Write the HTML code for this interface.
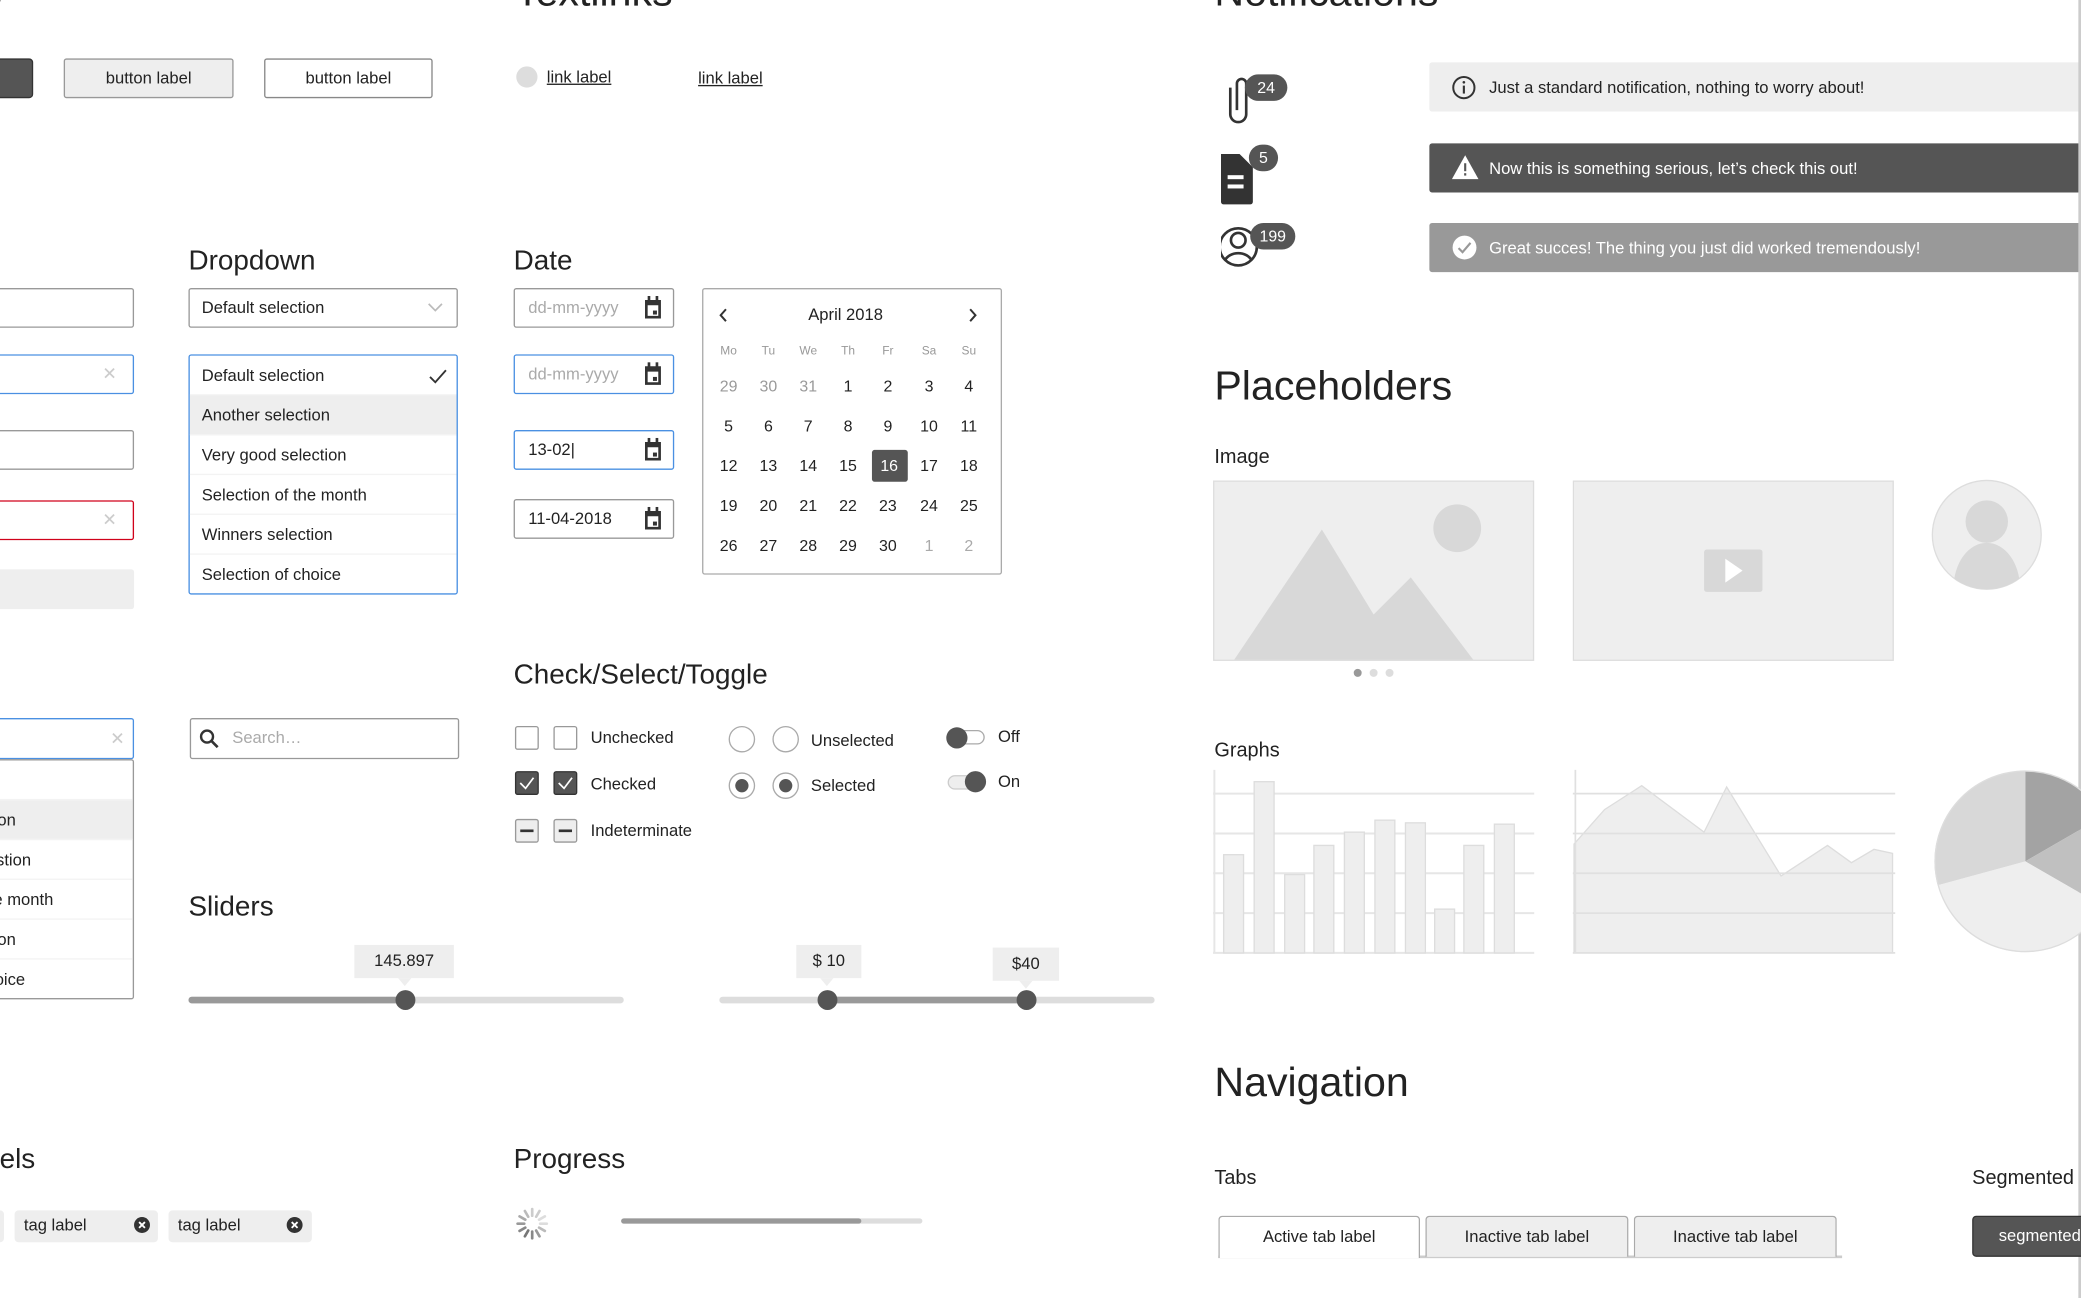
<!DOCTYPE html>
<html><head><meta charset="utf-8">
<style>
html,body{margin:0;padding:0;background:#fff;overflow:hidden}
body{width:2081px;height:1298px;position:relative}
#w{position:absolute;left:0;top:0;width:1568px;height:978px;transform:scale(1.32717);transform-origin:0 0;font-family:"Liberation Sans",Arial,sans-serif;color:#222;font-size:12.5px}
#w div,#w span{position:absolute;box-sizing:border-box}
.h1{font-size:31px;white-space:nowrap}
.h2{font-size:21px;white-space:nowrap}
.h3{font-size:15px;white-space:nowrap}
.box{border:1px solid #999;border-radius:2px;background:#fff;white-space:nowrap}
.t{white-space:nowrap}
.blue{border-color:#4a90e2!important}
.x{color:#ccc;font-size:13px}
.row{left:0;width:100%;height:30px;line-height:30px;padding-left:9px;border-bottom:1px solid #f3f3f3}
.cal{width:30px;text-align:center;font-size:12px}
.cb{width:18px;height:18px;border:1px solid #999;border-radius:2px;background:#fff}
.cbk{background:#555;border-color:#333}
.ind{background:#eee}
.rd{width:20px;height:20px;border:1px solid #aaa;border-radius:50%;background:#fff}
</style></head><body><div id="w">

<div class="h1" style="left:-14px;top:-24px">s</div>
<div class="h1" style="left:388px;top:-24px">Textlinks</div>
<div class="h1" style="left:915px;top:-24px">Notifications</div>

<div style="left:-10px;top:44px;width:35px;height:30px;background:#555;border:1px solid #333;border-radius:3px"></div>
<div class="box" style="left:48px;top:44px;width:128px;height:30px;background:#eee;text-align:center;line-height:28px;border-color:#999">button label</div>
<div class="box" style="left:199px;top:44px;width:127px;height:30px;text-align:center;line-height:28px;border-color:#888">button label</div>

<div style="left:389px;top:50px;width:16px;height:16px;border-radius:50%;background:#ddd"></div>
<div class="t" style="left:412px;top:51px;text-decoration:underline">link label</div>
<div class="t" style="left:526px;top:52px;text-decoration:underline">link label</div>

<svg style="position:absolute;left:920px;top:54px" width="60" height="150" viewBox="0 0 60 150">
<path d="M7 12 V32 a6 6 0 0 0 12 0 V9 a3.5 3.5 0 0 0 -7 0 V29" fill="none" stroke="#333" stroke-width="2"/>
<rect x="18" y="2" width="32" height="20" rx="10" fill="#555"/>
<text x="34" y="16" font-size="12" fill="#fff" text-anchor="middle" font-family="Liberation Sans">24</text>
<path d="M0 62 h14 l10 10 v26 a2 2 0 0 1 -2 2 h-20 a2 2 0 0 1 -2 -2z" fill="#333"/>
<rect x="5" y="78" width="12" height="3" fill="#fff"/><rect x="5" y="85" width="12" height="3" fill="#fff"/>
<rect x="21" y="55" width="22" height="20" rx="10" fill="#555"/>
<text x="32" y="69" font-size="12" fill="#fff" text-anchor="middle" font-family="Liberation Sans">5</text>
<circle cx="13" cy="132" r="14" fill="none" stroke="#333" stroke-width="2"/>
<circle cx="13" cy="127" r="5.5" fill="none" stroke="#333" stroke-width="2"/>
<path d="M3 142 a11 9 0 0 1 20 0" fill="none" stroke="#333" stroke-width="2"/>
<rect x="22" y="114" width="34" height="20" rx="10" fill="#555"/>
<text x="39" y="128" font-size="12" fill="#fff" text-anchor="middle" font-family="Liberation Sans">199</text>
</svg>

<div style="left:1077px;top:47px;width:500px;height:37px;background:#eee;border-radius:2px"></div>
<svg style="position:absolute;left:1094px;top:57px" width="18" height="18"><circle cx="9" cy="9" r="8" fill="none" stroke="#333" stroke-width="1.5"/><rect x="8.2" y="7.5" width="1.6" height="6" fill="#333"/><circle cx="9" cy="5" r="1" fill="#333"/></svg>
<div class="t" style="left:1122px;top:59px">Just a standard notification, nothing to worry about!</div>
<div style="left:1077px;top:108px;width:500px;height:37px;background:#555;border-radius:2px"></div>
<svg style="position:absolute;left:1093px;top:116px" width="22" height="20"><path d="M11 1 L21 19 H1z" fill="#fff"/><rect x="10.2" y="7" width="1.6" height="6" fill="#555"/><rect x="10.2" y="14.5" width="1.6" height="1.8" fill="#555"/></svg>
<div class="t" style="left:1122px;top:120px;color:#fff">Now this is something serious, let’s check this out!</div>
<div style="left:1077px;top:168px;width:500px;height:37px;background:#999;border-radius:2px"></div>
<svg style="position:absolute;left:1094px;top:177px" width="19" height="19"><circle cx="9.5" cy="9.5" r="9" fill="#fff"/><path d="M5 10 l3 3 l6 -7" fill="none" stroke="#999" stroke-width="1.6"/></svg>
<div class="t" style="left:1122px;top:180px;color:#fff">Great succes! The thing you just did worked tremendously!</div>
<div style="left:1566px;top:0;width:2px;height:978px;background:#ccc"></div>

<div class="h2" style="left:142px;top:185px">Dropdown</div>
<div class="h2" style="left:387px;top:185px">Date</div>

<div class="box" style="left:-10px;top:217px;width:111px;height:30px"></div>
<div class="box blue" style="left:-10px;top:267px;width:111px;height:30px"><span class="x" style="left:86px;top:6px">✕</span></div>
<div class="box" style="left:-10px;top:324px;width:111px;height:30px"></div>
<div class="box" style="left:-10px;top:377px;width:111px;height:30px;border-color:#d0021b"><span class="x" style="left:86px;top:6px">✕</span></div>
<div style="left:-10px;top:429px;width:111px;height:30px;background:#eee;border-radius:2px"></div>

<div class="box" style="left:142px;top:217px;width:203px;height:30px;line-height:28px;padding-left:9px">Default selection
<svg style="position:absolute;left:179px;top:10px" width="12" height="8"><path d="M1 1 L6 6 L11 1" fill="none" stroke="#bbb" stroke-width="1.3"/></svg></div>

<div class="box blue" style="left:142px;top:267px;width:203px;height:181px;overflow:hidden">
<div class="row" style="top:0">Default selection<svg style="position:absolute;left:180px;top:10px" width="14" height="11"><path d="M1 6 L5 10 L13 1" fill="none" stroke="#333" stroke-width="1.4"/></svg></div>
<div class="row" style="top:30px;background:#eee">Another selection</div>
<div class="row" style="top:60px">Very good selection</div>
<div class="row" style="top:90px">Selection of the month</div>
<div class="row" style="top:120px">Winners selection</div>
<div class="row" style="top:150px;border:none">Selection of choice</div>
</div>

<div class="box" style="left:387px;top:217px;width:121px;height:30px;line-height:28px;padding-left:10px;color:#aaa">dd-mm-yyyy</div>
<div class="box blue" style="left:387px;top:267px;width:121px;height:30px;line-height:28px;padding-left:10px;color:#aaa">dd-mm-yyyy</div>
<div class="box blue" style="left:387px;top:324px;width:121px;height:30px;line-height:28px;padding-left:10px">13-02|</div>
<div class="box" style="left:387px;top:376px;width:121px;height:30px;line-height:28px;padding-left:10px">11-04-2018</div>
<svg style="position:absolute;left:485px;top:223px" width="14" height="180" viewBox="0 0 14 180">
<g fill="#333"><path d="M1 3h12v14h-12z M3 7v8h8v-8z" fill-rule="evenodd"/><rect x="3" y="0" width="2" height="4"/><rect x="9" y="0" width="2" height="4"/><rect x="7" y="11" width="3" height="3"/></g>
<g fill="#333" transform="translate(0,50)"><path d="M1 3h12v14h-12z M3 7v8h8v-8z" fill-rule="evenodd"/><rect x="3" y="0" width="2" height="4"/><rect x="9" y="0" width="2" height="4"/><rect x="7" y="11" width="3" height="3"/></g>
<g fill="#333" transform="translate(0,107)"><path d="M1 3h12v14h-12z M3 7v8h8v-8z" fill-rule="evenodd"/><rect x="3" y="0" width="2" height="4"/><rect x="9" y="0" width="2" height="4"/><rect x="7" y="11" width="3" height="3"/></g>
<g fill="#333" transform="translate(0,159)"><path d="M1 3h12v14h-12z M3 7v8h8v-8z" fill-rule="evenodd"/><rect x="3" y="0" width="2" height="4"/><rect x="9" y="0" width="2" height="4"/><rect x="7" y="11" width="3" height="3"/></g>
</svg>

<div class="box" style="left:529px;top:217px;width:226px;height:216px;border-color:#aaa"></div>
<svg style="position:absolute;left:540px;top:231px" width="200" height="14"><path d="M7 2 L3 6.5 L7 11" fill="none" stroke="#333" stroke-width="1.5"/><path d="M191 2 L195 6.5 L191 11" fill="none" stroke="#333" stroke-width="1.5"/></svg>
<div class="t" style="left:609px;top:230px">April 2018</div>
<div style="left:657px;top:339px;width:27px;height:24px;background:#555;border-radius:2px"></div>

<div class="h2" style="left:387px;top:497px">Check/Select/Toggle</div>
<div class="cb" style="left:388px;top:547px"></div><div class="cb" style="left:417px;top:547px"></div>
<div class="t" style="left:445px;top:549px">Unchecked</div>
<div class="cb cbk" style="left:388px;top:581px"></div><div class="cb cbk" style="left:417px;top:581px"></div>
<svg style="position:absolute;left:388px;top:581px" width="48" height="18"><path d="M4 9 L8 13 L14 5" fill="none" stroke="#fff" stroke-width="1.3"/><path d="M33 9 L37 13 L43 5" fill="none" stroke="#fff" stroke-width="1.3"/></svg>
<div class="t" style="left:445px;top:584px">Checked</div>
<div class="cb ind" style="left:388px;top:617px"></div><div class="cb ind" style="left:417px;top:617px"></div>
<div style="left:392px;top:625px;width:10px;height:2px;background:#333"></div><div style="left:421px;top:625px;width:10px;height:2px;background:#333"></div>
<div class="t" style="left:445px;top:619px">Indeterminate</div>

<div class="rd" style="left:549px;top:547px"></div><div class="rd" style="left:582px;top:547px"></div>
<div class="t" style="left:611px;top:551px">Unselected</div>
<div class="rd" style="left:549px;top:582px"></div><div class="rd" style="left:582px;top:582px"></div>
<div style="left:554px;top:587px;width:10px;height:10px;border-radius:50%;background:#555"></div>
<div style="left:587px;top:587px;width:10px;height:10px;border-radius:50%;background:#555"></div>
<div class="t" style="left:611px;top:585px">Selected</div>

<div style="left:714px;top:550px;width:28px;height:11px;border:1px solid #aaa;border-radius:6px;background:#fff"></div>
<div style="left:713px;top:548px;width:16px;height:16px;border-radius:50%;background:#555"></div>
<div class="t" style="left:752px;top:548px">Off</div>
<div style="left:714px;top:584px;width:28px;height:11px;border:1px solid #ccc;border-radius:6px;background:#eee"></div>
<div style="left:727px;top:581px;width:16px;height:16px;border-radius:50%;background:#555"></div>
<div class="t" style="left:752px;top:582px">On</div>

<div class="box blue" style="left:-10px;top:541px;width:111px;height:31px"><span class="x" style="left:92px;top:7px">✕</span></div>
<div class="box" style="left:-10px;top:572px;width:111px;height:181px;overflow:hidden;border-color:#999">
<div class="row" style="top:0;padding-left:0"></div>
<div class="row" style="top:30px;padding-left:0;background:#eee"><span style="left:7px;top:0">on</span></div>
<div class="row" style="top:60px;padding-left:0"><span style="left:6px;top:0">stion</span></div>
<div class="row" style="top:90px;padding-left:0"><span style="left:4px;top:0">e month</span></div>
<div class="row" style="top:120px;padding-left:0"><span style="left:7px;top:0">on</span></div>
<div class="row" style="top:150px;padding-left:0;border:none"><span style="left:5px;top:0">oice</span></div>
</div>

<div class="box" style="left:143px;top:541px;width:203px;height:31px;border-color:#999"></div>
<svg style="position:absolute;left:150px;top:549px" width="16" height="16"><circle cx="6" cy="6" r="4.5" fill="none" stroke="#333" stroke-width="1.8"/><path d="M9.5 9.5 L14 14" stroke="#333" stroke-width="2"/></svg>
<div class="t" style="left:175px;top:549px;color:#aaa">Search…</div>

<div class="h2" style="left:142px;top:672px">Sliders</div>
<div style="left:142px;top:751px;width:328px;height:5px;background:#ddd;border-radius:3px"></div>
<div style="left:142px;top:751px;width:163px;height:5px;background:#999;border-radius:3px"></div>
<div style="left:298px;top:746px;width:15px;height:15px;border-radius:50%;background:#555"></div>
<div style="left:267px;top:712px;width:75px;height:25px;background:#eee;text-align:center;line-height:25px">145.897</div>
<div style="left:300px;top:737px;width:0;height:0;border-left:5px solid transparent;border-right:5px solid transparent;border-top:6px solid #eee"></div>

<div style="left:542px;top:751px;width:328px;height:5px;background:#ddd;border-radius:3px"></div>
<div style="left:623px;top:751px;width:150px;height:5px;background:#999"></div>
<div style="left:616px;top:746px;width:15px;height:15px;border-radius:50%;background:#555"></div>
<div style="left:766px;top:746px;width:15px;height:15px;border-radius:50%;background:#555"></div>
<div style="left:600px;top:712px;width:49px;height:25px;background:#eee;text-align:center;line-height:25px">$ 10</div>
<div style="left:618px;top:737px;width:0;height:0;border-left:5px solid transparent;border-right:5px solid transparent;border-top:6px solid #eee"></div>
<div style="left:748px;top:714px;width:50px;height:25px;background:#eee;text-align:center;line-height:25px">$40</div>
<div style="left:768px;top:739px;width:0;height:0;border-left:5px solid transparent;border-right:5px solid transparent;border-top:6px solid #eee"></div>

<div class="h2" style="left:-12px;top:862px">bels</div>
<div class="h2" style="left:387px;top:862px">Progress</div>
<div style="left:-10px;top:912px;width:13px;height:24px;background:#eee;border-radius:3px"></div>
<div style="left:11px;top:912px;width:108px;height:24px;background:#eee;border-radius:3px"></div>
<div class="t" style="left:18px;top:916px">tag label</div>
<div style="left:127px;top:912px;width:108px;height:24px;background:#eee;border-radius:3px"></div>
<div class="t" style="left:134px;top:916px">tag label</div>
<svg style="position:absolute;left:100px;top:916px" width="130" height="14">
<circle cx="7" cy="7" r="6" fill="#333"/><path d="M4.8 4.8 L9.2 9.2 M9.2 4.8 L4.8 9.2" stroke="#fff" stroke-width="1.4"/>
<circle cx="122" cy="7" r="6" fill="#333"/><path d="M119.8 4.8 L124.2 9.2 M124.2 4.8 L119.8 9.2" stroke="#fff" stroke-width="1.4"/></svg>
<svg style="position:absolute;left:387px;top:908px" width="28" height="28" viewBox="-14 -14 28 28">
<g stroke-width="2" stroke-linecap="round">
<line x1="0" y1="-6" x2="0" y2="-11" stroke="#ccc"/>
<line x1="0" y1="-6" x2="0" y2="-11" stroke="#ccc" transform="rotate(30)"/>
<line x1="0" y1="-6" x2="0" y2="-11" stroke="#ddd" transform="rotate(60)"/>
<line x1="0" y1="-6" x2="0" y2="-11" stroke="#ddd" transform="rotate(90)"/>
<line x1="0" y1="-6" x2="0" y2="-11" stroke="#bbb" transform="rotate(120)"/>
<line x1="0" y1="-6" x2="0" y2="-11" stroke="#999" transform="rotate(150)"/>
<line x1="0" y1="-6" x2="0" y2="-11" stroke="#888" transform="rotate(180)"/>
<line x1="0" y1="-6" x2="0" y2="-11" stroke="#777" transform="rotate(210)"/>
<line x1="0" y1="-6" x2="0" y2="-11" stroke="#888" transform="rotate(240)"/>
<line x1="0" y1="-6" x2="0" y2="-11" stroke="#999" transform="rotate(270)"/>
<line x1="0" y1="-6" x2="0" y2="-11" stroke="#aaa" transform="rotate(300)"/>
<line x1="0" y1="-6" x2="0" y2="-11" stroke="#bbb" transform="rotate(330)"/>
</g></svg>
<div style="left:468px;top:918px;width:227px;height:4px;background:#ddd;border-radius:2px"></div>
<div style="left:468px;top:918px;width:181px;height:4px;background:#999;border-radius:2px"></div>

<div class="h1" style="left:915px;top:273px">Placeholders</div>
<div class="h3" style="left:915px;top:336px">Image</div>
<svg style="position:absolute;left:914px;top:362px" width="243" height="150">
<rect x="0.5" y="0.5" width="241" height="135" fill="#eee" stroke="#ddd"/>
<path d="M16 135 L82 37 L121 101 L149 73 L196 135z" fill="#d8d8d8"/>
<circle cx="184" cy="36" r="18" fill="#d8d8d8"/>
<circle cx="109" cy="145" r="3" fill="#999"/><circle cx="121" cy="145" r="3" fill="#ddd"/><circle cx="133" cy="145" r="3" fill="#ddd"/>
</svg>
<svg style="position:absolute;left:1185px;top:362px" width="243" height="137">
<rect x="0.5" y="0.5" width="241" height="135" fill="#eee" stroke="#ddd"/>
<rect x="99" y="52" width="44" height="32" rx="2" fill="#d8d8d8"/>
<path d="M115 59 V77 L128 68z" fill="#fff"/>
</svg>
<svg style="position:absolute;left:1454px;top:361px" width="86" height="86">
<defs><clipPath id="cc"><circle cx="43" cy="42" r="41"/></clipPath></defs>
<circle cx="43" cy="42" r="41" fill="#eee" stroke="#ddd"/>
<g clip-path="url(#cc)"><ellipse cx="43" cy="32" rx="16" ry="16" fill="#d8d8d8"/><ellipse cx="43" cy="82" rx="25" ry="34" fill="#d8d8d8"/></g>
</svg>

<div class="h3" style="left:915px;top:557px">Graphs</div>
<svg style="position:absolute;left:914px;top:580px" width="244" height="140">
<g stroke="#e6e6e6" stroke-width="1.5"><line x1="0" y1="18" x2="242" y2="18"/><line x1="0" y1="48" x2="242" y2="48"/><line x1="0" y1="78" x2="242" y2="78"/><line x1="0" y1="108" x2="242" y2="108"/><line x1="0" y1="138" x2="242" y2="138"/><line x1="1" y1="0" x2="1" y2="138"/></g>
<g fill="#eee" stroke="#ddd">
<rect x="8" y="64" width="15" height="74"/><rect x="31" y="9" width="15" height="129"/><rect x="54" y="79" width="15" height="59"/><rect x="76" y="57" width="15" height="81"/><rect x="99" y="47" width="15" height="91"/><rect x="122" y="38" width="15" height="100"/><rect x="145" y="40" width="15" height="98"/><rect x="167" y="105" width="15" height="33"/><rect x="189" y="57" width="15" height="81"/><rect x="212" y="41" width="15" height="97"/></g>
</svg>
<svg style="position:absolute;left:1185px;top:580px" width="244" height="140">
<path d="M1 56 L24 30 L52 12 L99 47 L116 13 L157 80 L192 57 L210 70 L227 60 L241 63 V138 H1z" fill="#eee" stroke="#ddd"/>
<g stroke="#e0e0e0" stroke-width="1.3"><line x1="0" y1="18" x2="243" y2="18"/><line x1="0" y1="48" x2="243" y2="48"/><line x1="0" y1="78" x2="243" y2="78"/><line x1="0" y1="108" x2="243" y2="108"/><line x1="0" y1="138" x2="243" y2="138"/><line x1="2" y1="0" x2="2" y2="138"/></g>
</svg>
<svg style="position:absolute;left:1456px;top:580px" width="112" height="140">
<g transform="translate(70,69)">
<path d="M0 0 L0 -68 A68 68 0 0 1 58.9 -34z" fill="#a3a3a3"/>
<path d="M0 0 L58.9 -34 A68 68 0 0 1 58.9 34z" fill="#c0c0c0"/>
<path d="M0 0 L58.9 34 A68 68 0 0 1 -66 18z" fill="#eee"/>
<path d="M0 0 L-66 18 A68 68 0 0 1 0 -68z" fill="#d8d8d8"/>
<circle r="68" fill="none" stroke="#ddd"/></g>
</svg>

<div class="h1" style="left:915px;top:798px">Navigation</div>
<div class="h3" style="left:915px;top:879px">Tabs</div>
<div class="h3" style="left:1486px;top:879px">Segmented</div>
<div style="left:918px;top:946px;width:470px;height:1.5px;background:#ccc"></div>
<div style="left:918px;top:916px;width:152px;height:32px;background:#fff;border:1px solid #aaa;border-bottom:none;border-radius:3px 3px 0 0;text-align:center;line-height:31px">Active tab label</div>
<div style="left:1074px;top:916px;width:153px;height:31px;background:#eee;border:1px solid #aaa;border-bottom:none;border-radius:3px 3px 0 0;text-align:center;line-height:31px">Inactive tab label</div>
<div style="left:1231px;top:916px;width:153px;height:31px;background:#eee;border:1px solid #aaa;border-bottom:none;border-radius:3px 3px 0 0;text-align:center;line-height:31px">Inactive tab label</div>
<div style="left:1486px;top:916px;width:90px;height:31px;background:#555;border:1px solid #333;border-radius:3px;color:#fff;line-height:29px;padding-left:19px">segmented</div>

<div class="cal" style="left:534px;top:259px;color:#999;font-size:9px">Mo</div>
<div class="cal" style="left:564px;top:259px;color:#999;font-size:9px">Tu</div>
<div class="cal" style="left:594px;top:259px;color:#999;font-size:9px">We</div>
<div class="cal" style="left:624px;top:259px;color:#999;font-size:9px">Th</div>
<div class="cal" style="left:654px;top:259px;color:#999;font-size:9px">Fr</div>
<div class="cal" style="left:685px;top:259px;color:#999;font-size:9px">Sa</div>
<div class="cal" style="left:715px;top:259px;color:#999;font-size:9px">Su</div>

<div class="cal" style="left:534px;top:284px;color:#999">29</div><div class="cal" style="left:564px;top:284px;color:#999">30</div><div class="cal" style="left:594px;top:284px;color:#999">31</div><div class="cal" style="left:624px;top:284px">1</div><div class="cal" style="left:654px;top:284px">2</div><div class="cal" style="left:685px;top:284px">3</div><div class="cal" style="left:715px;top:284px">4</div>
<div class="cal" style="left:534px;top:314px">5</div><div class="cal" style="left:564px;top:314px">6</div><div class="cal" style="left:594px;top:314px">7</div><div class="cal" style="left:624px;top:314px">8</div><div class="cal" style="left:654px;top:314px">9</div><div class="cal" style="left:685px;top:314px">10</div><div class="cal" style="left:715px;top:314px">11</div>
<div class="cal" style="left:534px;top:344px">12</div><div class="cal" style="left:564px;top:344px">13</div><div class="cal" style="left:594px;top:344px">14</div><div class="cal" style="left:624px;top:344px">15</div><div class="cal" style="left:655px;top:344px;color:#fff">16</div><div class="cal" style="left:685px;top:344px">17</div><div class="cal" style="left:715px;top:344px">18</div>
<div class="cal" style="left:534px;top:374px">19</div><div class="cal" style="left:564px;top:374px">20</div><div class="cal" style="left:594px;top:374px">21</div><div class="cal" style="left:624px;top:374px">22</div><div class="cal" style="left:654px;top:374px">23</div><div class="cal" style="left:685px;top:374px">24</div><div class="cal" style="left:715px;top:374px">25</div>
<div class="cal" style="left:534px;top:404px">26</div><div class="cal" style="left:564px;top:404px">27</div><div class="cal" style="left:594px;top:404px">28</div><div class="cal" style="left:624px;top:404px">29</div><div class="cal" style="left:654px;top:404px">30</div><div class="cal" style="left:685px;top:404px;color:#aaa">1</div><div class="cal" style="left:715px;top:404px;color:#aaa">2</div>

</div></body></html>
